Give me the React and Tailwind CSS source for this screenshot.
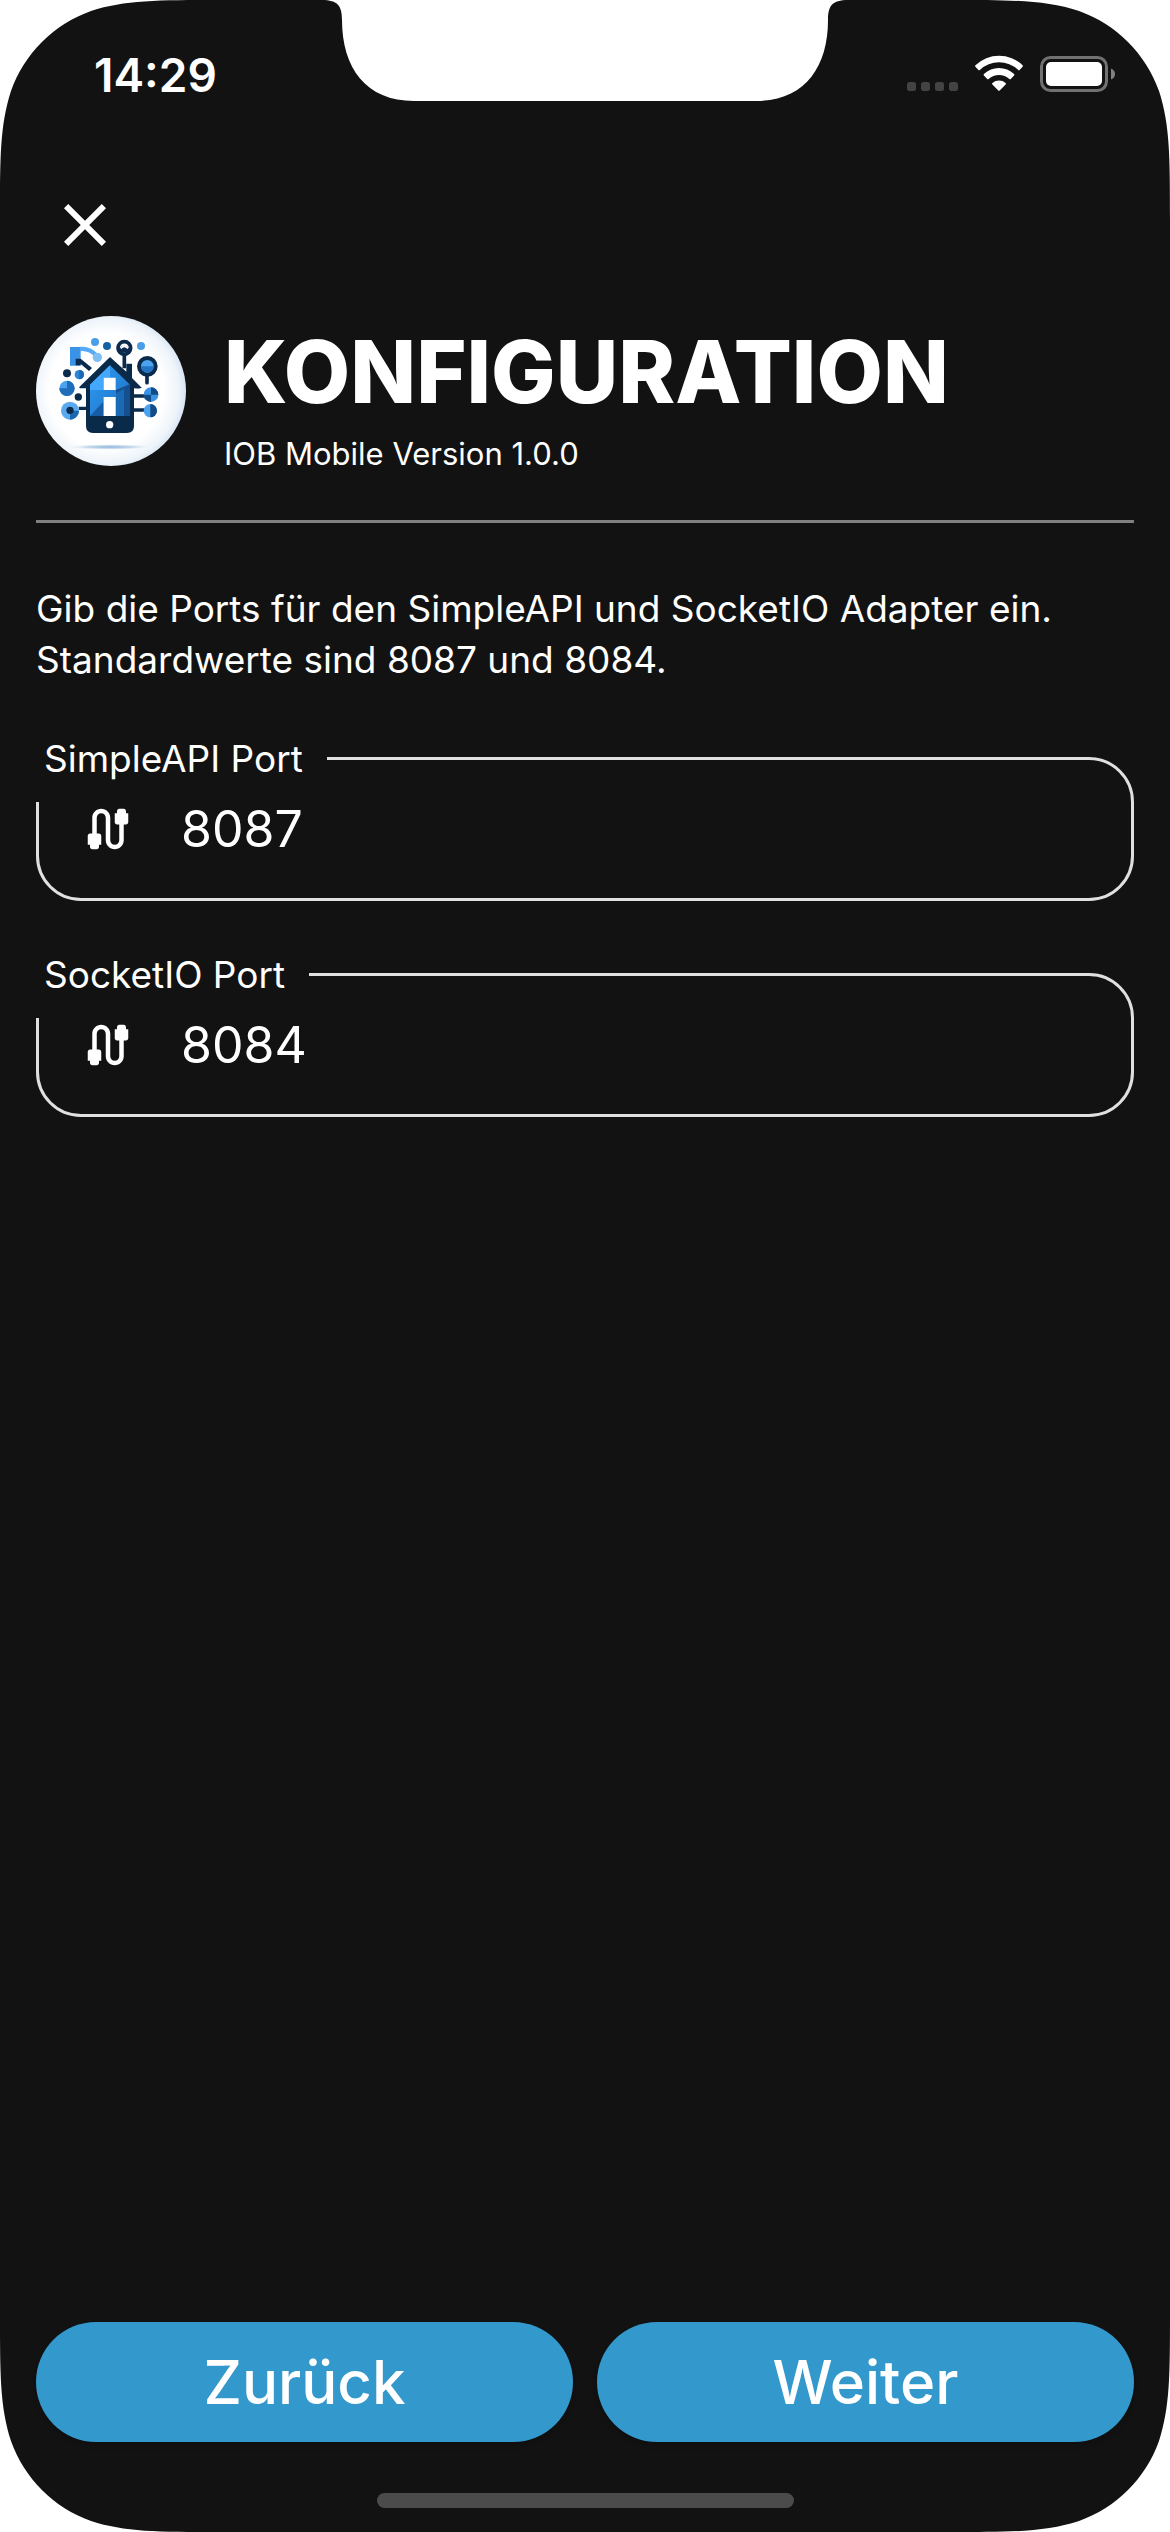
import { MdClose, MdCable } from "react-icons/md";

const CORNER =
  "M0 0H220C157 0 125 0 91 11C54 24 24 54 11 91C0 125 0 157 0 220Z";

function Corner({ className }) {
  return (
    <svg aria-hidden="true" viewBox="0 0 220 220" className={`pointer-events-none absolute size-[220px] ${className}`}>
      <path d={CORNER} fill="#fff" />
    </svg>
  );
}

function StatusBar() {
  return (
    <div className="flex h-[150px] items-start justify-between pt-12 pr-[54px] pl-[94px]">
      <time className="text-[46px] leading-[54px] font-semibold">14:29</time>
      <svg aria-hidden="true" viewBox="907 48 209 46" className="h-[46px] w-[209px]">
        <g fill="#434343">
          <rect x="907" y="82" width="9" height="9" rx="2.5" />
          <rect x="921" y="82" width="9" height="9" rx="2.5" />
          <rect x="935" y="82" width="9" height="9" rx="2.5" />
          <rect x="949" y="82" width="9" height="9" rx="2.5" />
        </g>
        <g fill="#fff">
          <path d="M975.4 65.2A34 34 0 0 1 1022.600 65.200Q1023.300 66 1022.600 66.700L1019.600 69.900Q1018.900 70.600 1018.100 69.900A28 28 0 0 0 979.900 69.900Q979.100 70.600 978.400 69.900L975.400 66.700Q974.700 66 975.400 65.200Z" />
          <path d="M983.900 74A22 22 0 0 1 1014.100 74Q1014.800 74.800 1014.100 75.500L1010.800 78.900Q1010.100 79.600 1009.300 78.900A15.500 15.500 0 0 0 988.700 78.900Q987.900 79.600 987.200 78.900L983.900 75.500Q983.200 74.800 983.900 74Z" />
          <path d="M992.400 83A10 10 0 0 1 1005.600 83Q1006.400 83.800 1005.600 84.500L999.700 90.400Q999 91.100 998.300 90.400L992.400 84.500Q991.600 83.800 992.400 83Z" />
          <rect x="1046" y="62" width="56" height="24" rx="5" />
        </g>
        <rect x="1041.500" y="57.500" width="65" height="33" rx="9" fill="none" stroke="#717171" strokeWidth="3" />
        <path d="M1111 68.500Q1115 70 1115 74T1111 79.500Z" fill="#808080" />
      </svg>
    </div>
  );
}

function Logo() {
  return (
    <svg role="img" aria-label="IOB Mobile" viewBox="18 18 450 450" className="size-[150px] shrink-0 rounded-full">
      <defs>
        <radialGradient id="disc" cx="0.47" cy="0.5" r="0.56">
          <stop offset="0.68" stopColor="#fff" />
          <stop offset="0.86" stopColor="#eef4fa" />
          <stop offset="1" stopColor="#c8dcef" />
        </radialGradient>
        <radialGradient id="shade">
          <stop offset="0" stopColor="#8fb6dc" />
          <stop offset="0.5" stopColor="#c6daed" />
          <stop offset="1" stopColor="#fff" stopOpacity="0" />
        </radialGradient>
        <linearGradient id="wall" x1="0" y1="0" x2="1" y2="1">
          <stop offset="0" stopColor="#2f9bf5" />
          <stop offset="1" stopColor="#1d72c4" />
        </linearGradient>
      </defs>
      <rect x="18" y="18" width="450" height="450" fill="url(#disc)" />
      <ellipse cx="240" cy="411" rx="140" ry="9" fill="url(#shade)" />
      <path d="M120 111H152V167H120Z" fill="#3b93e6" />
      <path d="M150 117Q180 114 200 138" fill="none" stroke="#55aaf5" strokeWidth="13" />
      <circle cx="202" cy="142" r="14" fill="#7fbdf5" />
      <path d="M137 146H152L186 174L177 183L152 162V166H137Z" fill="#0b2b4c" />
      <circle cx="195" cy="96" r="12" fill="#4a9ee8" />
      <circle cx="231" cy="108" r="12" fill="#1560a5" />
      <circle cx="333" cy="108" r="12" fill="#4a9ee8" />
      <circle cx="111" cy="190" r="12" fill="#0b2b4c" />
      <circle cx="148" cy="194" r="14" fill="#2c86da" />
      <path d="M148 180a14 14 0 0 1 0 28Z" fill="#1a68b3" />
      <circle cx="145" cy="261" r="11" fill="#0b2b4c" />
      <circle cx="111" cy="235" r="23" fill="#4ba3f0" />
      <path d="M88 235H111V212A23 23 0 0 1 134 235A23 23 0 0 1 88 235Z" fill="#1f6db8" />
      <path d="M146 295H172" stroke="#0b2b4c" strokeWidth="10" />
      <circle cx="120" cy="302" r="27" fill="#58a9f0" />
      <path d="M120 302H147A27 27 0 0 1 120 329Z" fill="#1b66ae" />
      <circle cx="120" cy="301" r="11" fill="#0b2b4c" />
      <path d="M310 258H350M310 300H350M351 190V218" stroke="#0b2b4c" strokeWidth="11" strokeLinecap="round" />
      <circle cx="363" cy="254" r="22" fill="#3b93e6" />
      <path d="M363 232A22 22 0 0 1 363 276V254H341A22 22 0 0 0 385 254H363Z" fill="#134b85" />
      <circle cx="361" cy="302" r="20" fill="#4ba3f0" />
      <path d="M361 282A20 20 0 0 1 361 322Z" fill="#134b85" />
      <circle cx="352" cy="169" r="25" fill="#4ba3f0" stroke="#0b2b4c" strokeWidth="12" />
      <path d="M352 150V169H371A19 19 0 0 1 333 169H352Z" fill="#2375c4" />
      <path d="M283 130V175" stroke="#0b2b4c" strokeWidth="11" />
      <circle cx="283" cy="114" r="19" fill="#fff" stroke="#0b2b4c" strokeWidth="11" />
      <path d="M266 117Q283 98 300 117L294 128H272Z" fill="#0b2b4c" />
      <path d="M272 115Q283 103 294 115" fill="none" stroke="#fff" strokeWidth="5" />
      <path d="M240 141L289 185V161H306V204L335 233Q333 236 312 235V348Q312 369 291 369H189Q168 369 168 348V235H150Q147 234 148 231Z" fill="#0a2a4a" />
      <path d="M240 166L300 224V318H180V224Z" fill="url(#wall)" />
      <path d="M240 166L180 224V240H220V203H240Z" fill="#45a8ff" />
      <path d="M258 240L300 222V318H258Z" fill="#14508f" />
      <path d="M258 250L282 236V318H258Z" fill="#1a69b5" />
      <path d="M180 318L220 275V318Z" fill="#155da6" />
      <path d="M221 203H257V240H221ZM221 261H257V318H221Z" fill="#fff" />
      <circle cx="239" cy="344" r="11" fill="#fff" />
    </svg>
  );
}

function PortField({ id, label, value }) {
  return (
    <div className="relative flex h-36 items-center rounded-[45px] border-[3px] border-[#e0e0e0] pl-[42px]">
      <label htmlFor={id} className="absolute -top-[27px] -left-[3px] h-[69px] bg-[#121212] pr-6 pl-2 text-[37px] leading-[51px]">
        {label}
      </label>
      <MdCable aria-hidden="true" className="size-[54px] shrink-0" />
      <input id={id} defaultValue={value} inputMode="numeric" className="ml-[46px] min-w-0 flex-1 bg-transparent text-[50px] leading-[60px] outline-none" />
    </div>
  );
}

const BUTTON =
  "h-[120px] flex-1 rounded-full bg-[#3399cd] text-[60px] leading-[72px] font-medium shadow-md";

export default function App() {
  return (
    <div className="relative flex min-h-screen flex-col overflow-hidden bg-[#121212] font-[Inter,sans-serif] text-white">
      <StatusBar />
      <main className="flex flex-1 flex-col px-9">
        <button type="button" aria-label="Schließen" className="mt-[39px] ml-[13px] self-start">
          <MdClose className="size-[72px]" />
        </button>
        <header className="mt-[55px] flex gap-[38px] border-b-[3px] border-[#808080] pb-12">
          <Logo />
          <div className="pt-2">
            <h1 className="text-[86px] leading-[96px] font-extrabold">KONFIGURATION</h1>
            <p className="mt-4 text-[31px] leading-9">IOB Mobile Version 1.0.0</p>
          </div>
        </header>
        <p className="mt-[60px] text-[37px] leading-[51px]">
          Gib die Ports für den SimpleAPI und SocketIO Adapter ein.
          <br />
          Standardwerte sind 8087 und 8084.
        </p>
        <form className="mt-[72px] flex flex-col gap-[72px]">
          <PortField id="simple-api-port" label="SimpleAPI Port" value="8087" />
          <PortField id="socket-io-port" label="SocketIO Port" value="8084" />
        </form>
        <div className="mt-auto flex gap-6 pb-[51px]">
          <button type="button" className={BUTTON}>Zurück</button>
          <button type="button" className={BUTTON}>Weiter</button>
        </div>
      </main>
      <div className="mx-auto mb-6 h-[15px] w-[417px] rounded-full bg-[#4b4b4b]" />
      <svg aria-hidden="true" viewBox="320 0 530 102" className="pointer-events-none absolute top-0 left-1/2 h-[102px] w-[530px] -translate-x-1/2">
        <path d="M322 0C338 0 342 6 342 20C342 68 366 101 414 101H756C804 101 828 68 828 20C828 6 832 0 848 0Z" fill="#fff" />
      </svg>
      <Corner className="top-0 left-0" />
      <Corner className="top-0 right-0 rotate-90" />
      <Corner className="right-0 bottom-0 rotate-180" />
      <Corner className="bottom-0 left-0 -rotate-90" />
    </div>
  );
}
